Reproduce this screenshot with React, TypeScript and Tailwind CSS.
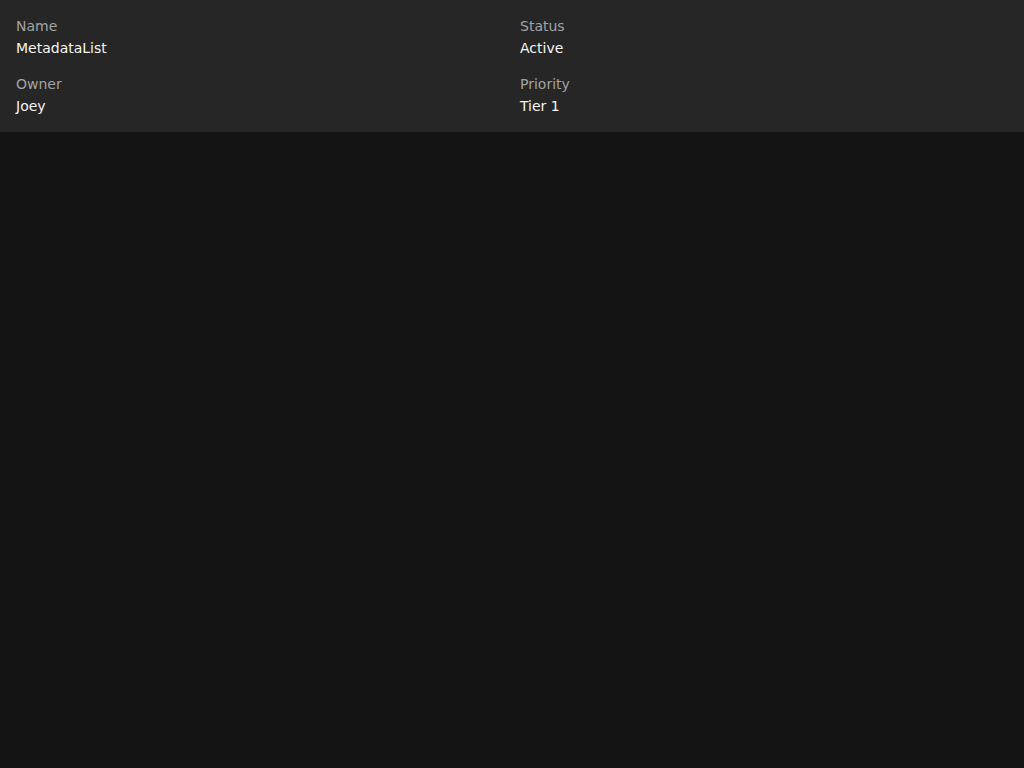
const items = [
  { label: "Name", value: "MetadataList" },
  { label: "Status", value: "Active" },
  { label: "Owner", value: "Joey" },
  { label: "Priority", value: "Tier 1" },
]

export default function App() {
  return (
    <div className="min-h-screen bg-[#141414] font-['DejaVu_Sans',sans-serif]">
      <dl className="grid grid-cols-2 gap-x-4 gap-y-4 bg-[#262626] p-4">
        {items.map((item) => (
          <div key={item.label}>
            <dt className="text-sm leading-5 text-[#a3a3a3]">{item.label}</dt>
            <dd className="mt-0.5 text-sm leading-5 text-[#f5f5f5]">{item.value}</dd>
          </div>
        ))}
      </dl>
    </div>
  )
}
